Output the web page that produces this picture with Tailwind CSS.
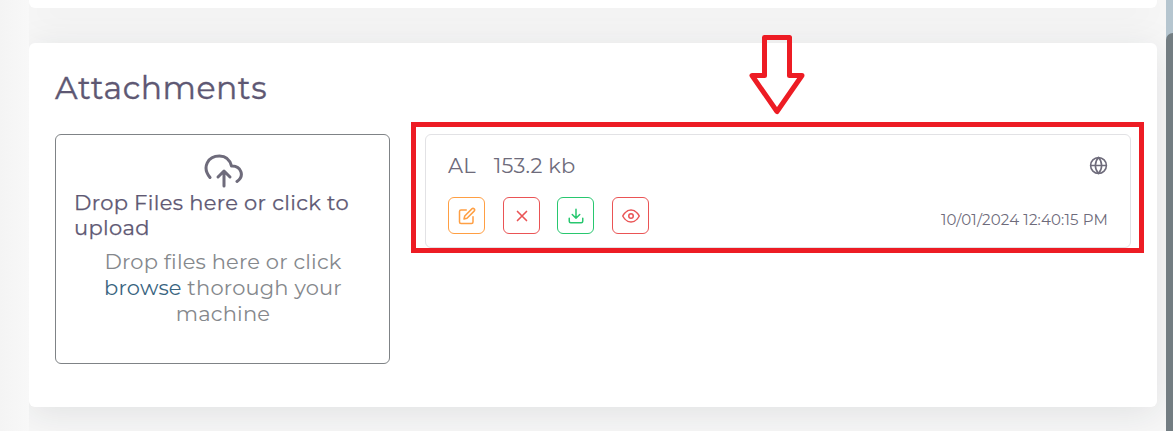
<!DOCTYPE html>
<html lang="en">
<head>
<meta charset="utf-8">
<title>Attachments</title>
<script src="https://cdn.jsdelivr.net/npm/@tailwindcss/browser@4"></script>
</head>
<body class="font-['Montserrat','Inter',sans-serif] bg-[#f7f7f7] overflow-hidden">
<div class="relative flex w-[1173px] h-[431px] overflow-hidden">
  <aside class="z-10 w-[29px] shrink-0 bg-linear-to-r from-[#f4f4f4] to-[#f8f8f8]"></aside>
  <main class="w-[1128px] shrink-0 flex flex-col gap-[35px]">
    <section class="h-2 shrink-0 rounded-b-md bg-white shadow-[0_6px_36px_rgba(34,41,47,0.1)]"></section>
    <section class="h-[364px] shrink-0 rounded-md bg-white shadow-[0_6px_36px_rgba(34,41,47,0.1)] px-[26px] pt-[27px]">
      <h2 class="h-9 leading-9 text-[31.5px] [-webkit-text-stroke:0.35px] tracking-[0.53px] text-[#5e5873] whitespace-nowrap">Attachments</h2>
      <div class="flex items-start gap-[35px] mt-7">
        <div class="w-[335px] h-[230px] shrink-0 rounded-[6px] border border-[#7f8386] px-[18px] pt-[18px]">
          <svg class="block ml-[128.500px]" width="42" height="36" viewBox="0 0 42 36" fill="none" stroke="#6e6b7b" stroke-width="3" stroke-linecap="round" stroke-linejoin="round"><path d="M7 24.500C-1.500 14 5 3 16.500 3C23 3 27 7.500 28.500 13C38 12.500 42 23 34 28.500"/><path d="M21 33V18M15 24l6-6 6 6"/></svg>
          <h5 class="mt-px text-[21px] leading-[25px] [-webkit-text-stroke:0.25px] tracking-[0.34px] text-[#5e5873] whitespace-nowrap">Drop Files here or click to<br>upload</h5>
          <p class="mt-[9px] pl-px text-center text-[21px] leading-[26px] tracking-[0.18px] text-[#85888c] whitespace-nowrap">Drop files here or click<br><span class="text-[#39647f]">browse</span> thorough your<br>machine</p>
        </div>
        <div class="w-[706px] h-[114px] shrink-0 rounded-[6px] border border-[#e2e2e5] pl-[22px] pr-[22px] pt-[18px]">
          <div class="flex justify-between h-[44px]">
            <div class="flex gap-[18px] h-[26px] leading-[26px] text-[21px] tracking-[0.18px] text-[#6e6b7b] whitespace-nowrap"><span>AL</span><span>153.2 kb</span></div>
            <svg class="mt-[3px]" width="19" height="19" viewBox="0 0 24 24" fill="none" stroke="#6e6b7b" stroke-width="2"><circle cx="12" cy="12" r="10"/><path d="M2 12h20M12 2a15.300 15.300 0 0 1 4 10 15.300 15.300 0 0 1-4 10 15.300 15.300 0 0 1-4-10 15.300 15.300 0 0 1 4-10z"/></svg>
          </div>
          <div class="flex justify-between">
            <div class="flex gap-[17.700px]">
              <button class="size-[37px] rounded-[6px] border border-[#ff9f43] text-[#ff9f43] flex items-center justify-center"><svg width="18" height="18" viewBox="0 0 24 24" fill="none" stroke="currentColor" stroke-width="2" stroke-linecap="round" stroke-linejoin="round"><path d="M11 4H4a2 2 0 0 0-2 2v14a2 2 0 0 0 2 2h14a2 2 0 0 0 2-2v-7"/><path d="M18.500 2.500a2.121 2.121 0 0 1 3 3L12 15l-4 1 1-4 9.500-9.500z"/></svg></button>
              <button class="size-[37px] rounded-[6px] border border-[#ea5455] text-[#ea5455] flex items-center justify-center pl-px"><svg width="18" height="18" viewBox="0 0 24 24" fill="none" stroke="currentColor" stroke-width="2.200" stroke-linecap="round"><path d="M18 6L6 18M6 6l12 12"/></svg></button>
              <button class="size-[37px] rounded-[6px] border border-[#28c76f] text-[#28c76f] flex items-center justify-center"><svg width="18" height="18" viewBox="0 0 24 24" fill="none" stroke="currentColor" stroke-width="2" stroke-linecap="round" stroke-linejoin="round"><path d="M21 15v4a2 2 0 0 1-2 2H5a2 2 0 0 1-2-2v-4M7 10l5 5 5-5M12 15V3"/></svg></button>
              <button class="size-[37px] rounded-[6px] border border-[#ea5455] text-[#ea5455] flex items-center justify-center"><svg width="18" height="18" viewBox="0 0 24 24" fill="none" stroke="currentColor" stroke-width="2" stroke-linecap="round" stroke-linejoin="round"><path d="M1 12s4-8 11-8 11 8 11 8-4 8-11 8-11-8-11-8z"/><circle cx="12" cy="12" r="3"/></svg></button>
            </div>
            <time class="mt-[13px] h-5 leading-5 text-[15px] tracking-[0.16px] text-[#6e6b7b] whitespace-nowrap">10/01/2024 12:40:15 PM</time>
          </div>
        </div>
      </div>
    </section>
  </main>
  <div class="ml-auto w-[7px] shrink-0 bg-[#b5c5cf] pt-[33px]"><div class="h-[420px] w-[14px] rounded-[7px] bg-[#737d82]"></div></div>
  <div class="absolute left-[411px] top-[122px] w-[733px] h-[131px] border-[5px] border-[#ed1c24]"></div>
  <svg class="absolute left-[748px] top-[34px]" width="58" height="82" viewBox="0 0 58 82" fill="none" stroke="#ed1c24" stroke-width="5" stroke-linejoin="round"><path d="M16.500 3.500H41.500V41.500H54L29 77.500L4 41.500H16.500z"/></svg>
</div>
</body>
</html>
